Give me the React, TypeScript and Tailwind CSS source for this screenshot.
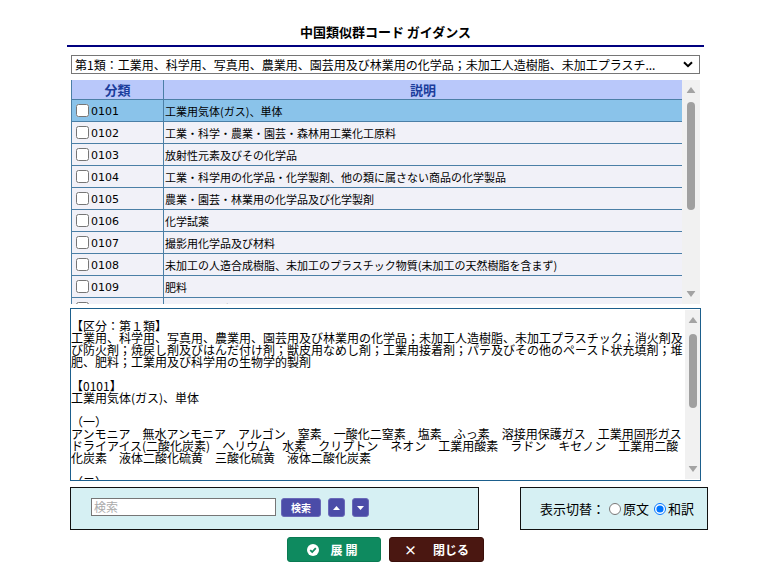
import React from "react";

type Row = { code: string; name: string };

const rows: Row[] = [
  { code: "0101", name: "工業用気体(ガス)、単体" },
  { code: "0102", name: "工業・科学・農業・園芸・森林用工業化工原料" },
  { code: "0103", name: "放射性元素及びその化学品" },
  { code: "0104", name: "工業・科学用の化学品・化学製剤、他の類に属さない商品の化学製品" },
  { code: "0105", name: "農業・園芸・林業用の化学品及び化学製剤" },
  { code: "0106", name: "化学試薬" },
  { code: "0107", name: "撮影用化学品及び材料" },
  { code: "0108", name: "未加工の人造合成樹脂、未加工のプラスチック物質(未加工の天然樹脂を含まず)" },
  { code: "0109", name: "肥料" },
  { code: "0110", name: "消火剤及び防火剤" },
];

const desc = `【区分：第１類】
工業用、科学用、写真用、農業用、園芸用及び林業用の化学品；未加工人造樹脂、未加工プラスチック；消火剤及び防火剤；焼戻し剤及びはんだ付け剤；獣皮用なめし剤；工業用接着剤；パテ及びその他のペースト状充填剤；堆肥、肥料；工業用及び科学用の生物学的製剤

【0101】
工業用気体(ガス)、単体

（一）
アンモニア　無水アンモニア　アルゴン　窒素　一酸化二窒素　塩素　ふっ素　溶接用保護ガス　工業用固形ガスドライアイス(二酸化炭素)　ヘリウム　水素　クリプトン　ネオン　工業用酸素　ラドン　キセノン　工業用二酸化炭素　液体二酸化硫黄　三酸化硫黄　液体二酸化炭素

（二）
工業用ガス混合物`;

function Scrollbar({ thumbTop, thumbHeight }: { thumbTop: number; thumbHeight: number }) {
  return (
    <div className="relative h-full w-full bg-[#f1f1f1]">
      <svg className="absolute left-1/2 top-[7px] -translate-x-1/2" width="9" height="6" viewBox="0 0 9 6">
        <path d="M0 6 L4.5 0 L9 6 Z" fill="#a3a3a3" />
      </svg>
      <div
        className="absolute left-1/2 w-[8px] -translate-x-1/2 rounded-full bg-[#a0a0a0]"
        style={{ top: thumbTop, height: thumbHeight }}
      />
      <svg className="absolute bottom-[7px] left-1/2 -translate-x-1/2" width="9" height="6" viewBox="0 0 9 6">
        <path d="M0 0 L4.5 6 L9 0 Z" fill="#a3a3a3" />
      </svg>
    </div>
  );
}

export default function App() {
  return (
    <div className="min-h-[584px] bg-white font-['Noto_Sans_CJK_JP','Noto_Sans',sans-serif] text-black">
      <div className="mx-auto w-[637px]">
        <div className="pt-[24px] text-center text-[13px] font-bold leading-[16px]">中国類似群コード ガイダンス</div>
        <div className="mt-[5px] h-[2px] bg-[#00007f]" />

        <div className="px-[3px]">
          <div className="mx-[1px] mt-[8px] flex h-[19px] items-center border border-[#767676] bg-white pl-[3px] pr-[6px]">
            <div className="flex-1 truncate text-[12px] leading-[17px]">
              第1類：工業用、科学用、写真用、農業用、園芸用及び林業用の化学品；未加工人造樹脂、未加工プラスチ...
            </div>
            <svg width="10" height="7" viewBox="0 0 10 7">
              <path d="M1 1.2 L5 5.2 L9 1.2" fill="none" stroke="#000" strokeWidth="2" />
            </svg>
          </div>

          <div className="mx-[1px] mt-[6px] flex h-[224px]">
            <div className="flex-1 overflow-hidden border-l border-[#4b7fa6]">
              <div className="flex h-[20px] border-b border-[#4b7fa6] bg-[#b9c8fa] text-[13px] font-bold leading-[19px] text-[#1c3d9c]">
                <div className="w-[92px] border-r border-[#4b7fa6] text-center">分類</div>
                <div className="flex-1 text-center">説明</div>
              </div>
              {rows.map((r, i) => (
                <div
                  key={r.code}
                  className={`flex h-[22px] border-b border-[#4b7fa6] ${i === 0 ? "bg-[#8ac3ea]" : "bg-[#f1f1f8]"}`}
                >
                  <div className="flex w-[92px] items-center border-r border-[#4b7fa6]">
                    <input type="checkbox" readOnly className="m-0 ml-[4px] mr-[2px] h-[13px] w-[13px]" />
                    <span className="pt-[2px] font-['DejaVu_Sans',sans-serif] text-[11px] leading-[13px]">{r.code}</span>
                  </div>
                  <div className="flex flex-1 items-center pl-[1px] text-[11px] leading-[14px]">{r.name}</div>
                </div>
              ))}
            </div>
            <div className="w-[18px]">
              <Scrollbar thumbTop={22} thumbHeight={108} />
            </div>
          </div>

          <div className="mt-[4px] flex h-[173px] border border-[#1b5e8c]">
            <div className="flex-1 overflow-hidden whitespace-pre-wrap pt-[11px] text-[12px] leading-[12px]">{desc}</div>
            <div className="w-[15px] py-[1px]">
              <Scrollbar thumbTop={24} thumbHeight={74} />
            </div>
          </div>
        </div>

        <div className="ml-[3px] mt-[6px] flex h-[43px] w-[638px] justify-between">
          <div className="flex w-[409px] items-start border border-[#111] bg-[#d6f0f3] pl-[20px] pt-[10px]">
            <input
              placeholder="検索"
              readOnly
              className="h-[18px] w-[185px] border border-[#767676] bg-white px-[2px] text-[12px] placeholder:text-[#aaaaaa]"
            />
            <button className="ml-[5px] h-[19px] w-[40px] rounded-[3px] border border-[#6a6ab8] bg-[#4b4ca8] text-[10px] font-bold leading-[17px] text-white">
              検索
            </button>
            <button className="ml-[7px] flex h-[19px] w-[17px] items-center justify-center rounded-[3px] border border-[#6a6ab8] bg-[#4b4ca8]">
              <svg width="7" height="4" viewBox="0 0 7 4">
                <path d="M0 4 L3.5 0 L7 4 Z" fill="#fff" />
              </svg>
            </button>
            <button className="ml-[7px] flex h-[19px] w-[17px] items-center justify-center rounded-[3px] border border-[#6a6ab8] bg-[#4b4ca8]">
              <svg width="7" height="4" viewBox="0 0 7 4">
                <path d="M0 0 L3.5 4 L7 0 Z" fill="#fff" />
              </svg>
            </button>
          </div>
          <div className="flex w-[188px] items-center border border-[#111] bg-[#d6f0f3] pl-[19px] text-[13px]">
            <span>表示切替：</span>
            <label className="ml-[4px] flex items-center gap-[2px]">
              <input type="radio" name="mode" readOnly className="m-0 h-[12px] w-[12px]" />
              <span>原文</span>
            </label>
            <label className="ml-[5px] flex items-center gap-[2px]">
              <input type="radio" name="mode" defaultChecked className="m-0 h-[12px] w-[12px]" />
              <span>和訳</span>
            </label>
          </div>
        </div>

        <div className="mt-[7px] flex justify-center gap-[8px]">
          <button className="flex h-[25px] w-[94px] items-center justify-center gap-[11px] rounded-[3px] border border-[#0a7a52] bg-[#0e8a5f] text-[12px] font-bold text-white">
            <svg width="12" height="12" viewBox="0 0 12 12">
              <circle cx="6" cy="6" r="6" fill="#fff" />
              <path d="M3.2 6.2 L5.2 8 L8.8 4.2" fill="none" stroke="#0e8a5f" strokeWidth="1.8" />
            </svg>
            <span className="tracking-[3px]">展開</span>
          </button>
          <button className="flex h-[25px] w-[95px] items-center justify-center gap-[16px] rounded-[3px] border border-[#3a0f0a] bg-[#4a1711] text-[12px] font-bold text-white">
            <span className="text-[13px] leading-none">×</span>
            <span>閉じる</span>
          </button>
        </div>
      </div>
    </div>
  );
}
